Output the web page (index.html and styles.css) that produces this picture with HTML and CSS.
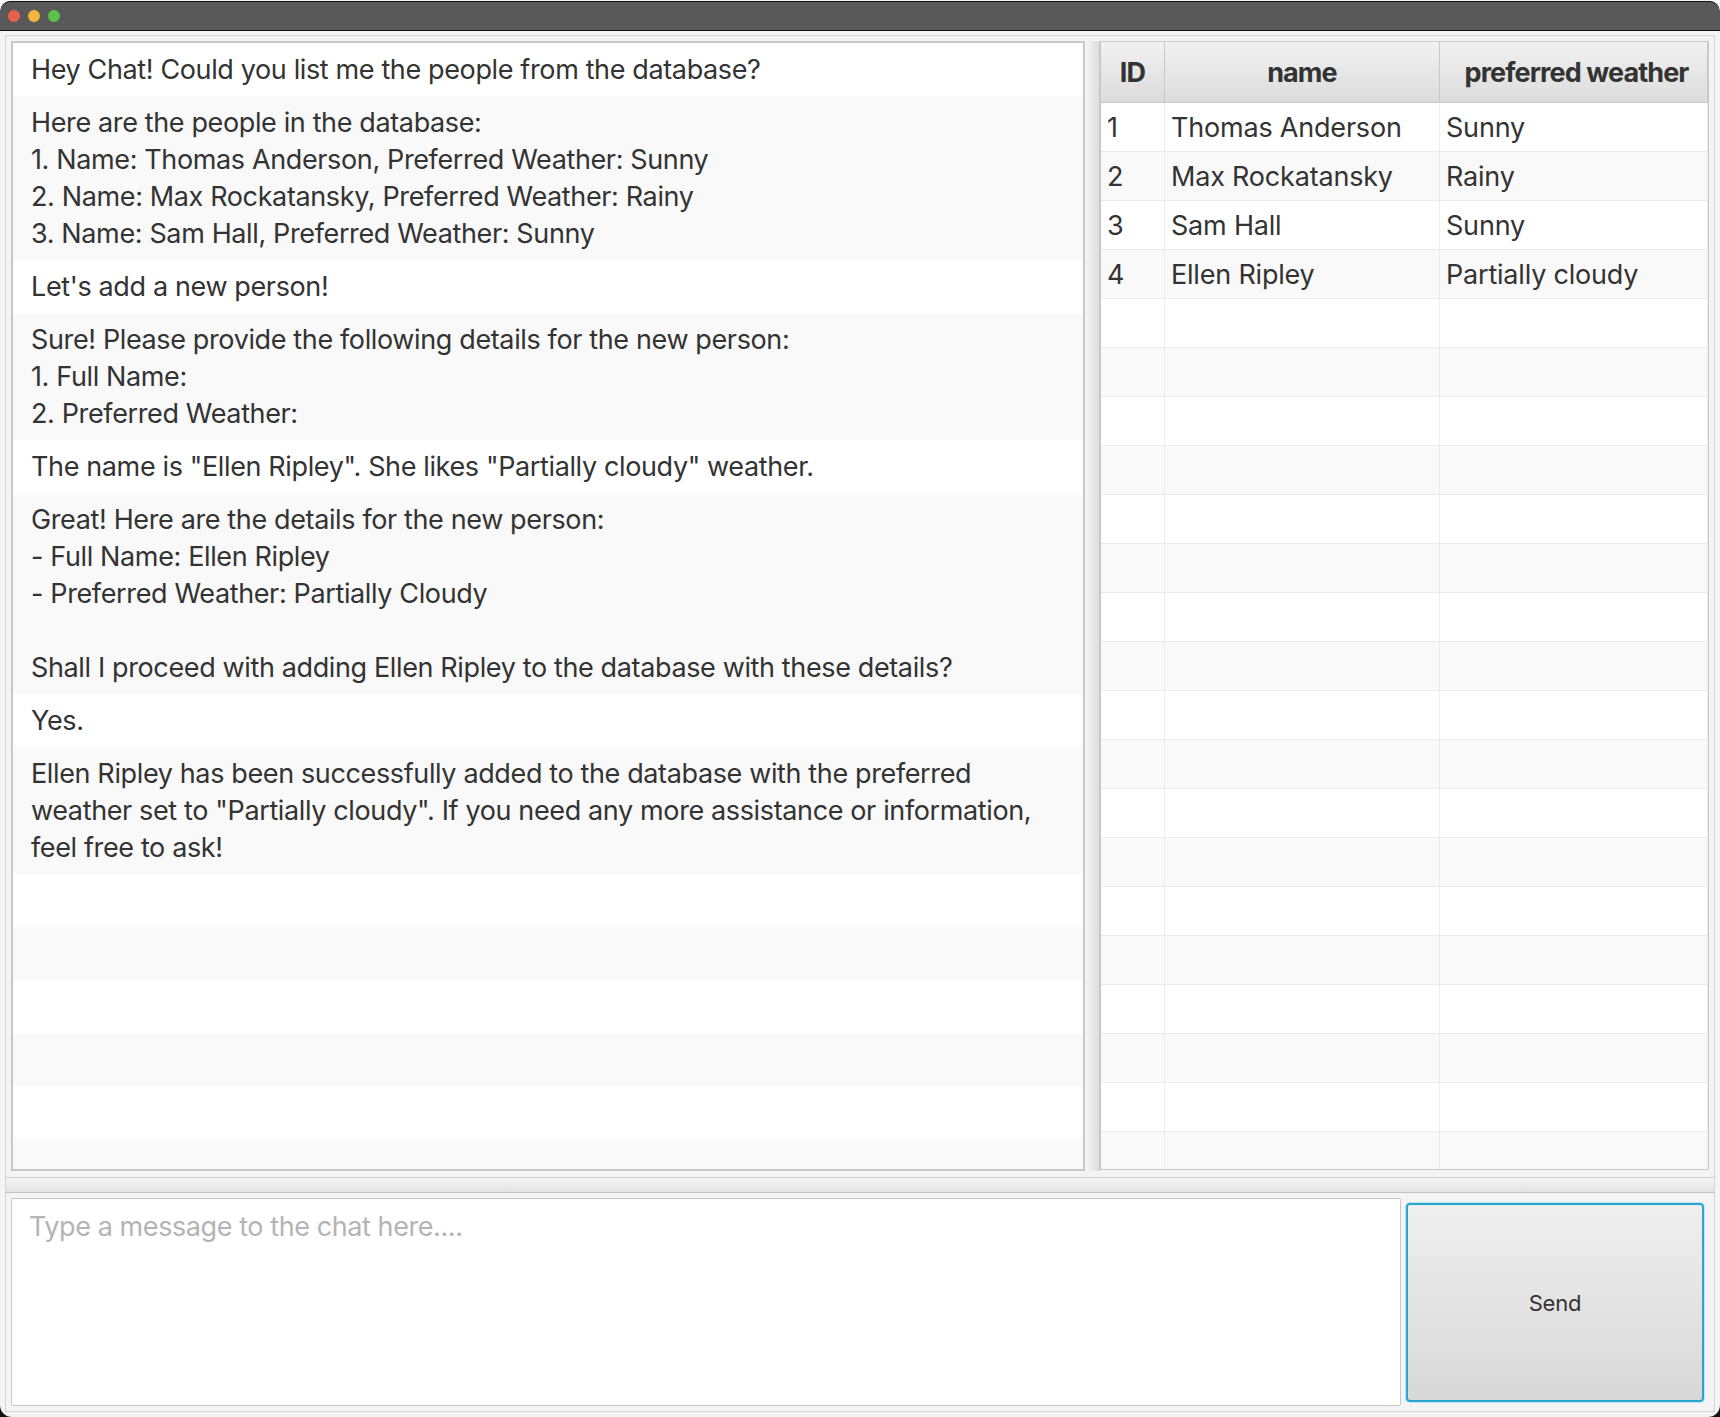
FILE: index.html
```html
<!DOCTYPE html>
<html lang="en">
<head>
    <meta charset="UTF-8">
    <title>Chat</title>
    <link rel="stylesheet" href="styles.css">
</head>
<body>
    <div class="window">
        <div class="titlebar">
            <span class="light red"></span>
            <span class="light yellow"></span>
            <span class="light green"></span>
        </div>
        <div class="frame">
            <div class="top-pane">
                <div class="chat-list">
                    <div class="msg">Hey Chat! Could you list me the people from the database?</div>
                    <div class="msg">Here are the people in the database:<br>1. Name: Thomas Anderson, Preferred Weather: Sunny<br>2. Name: Max Rockatansky, Preferred Weather: Rainy<br>3. Name: Sam Hall, Preferred Weather: Sunny</div>
                    <div class="msg">Let's add a new person!</div>
                    <div class="msg">Sure! Please provide the following details for the new person:<br>1. Full Name:<br>2. Preferred Weather:</div>
                    <div class="msg">The name is "Ellen Ripley". She likes "Partially cloudy" weather.</div>
                    <div class="msg">Great! Here are the details for the new person:<br>- Full Name: Ellen Ripley<br>- Preferred Weather: Partially Cloudy<br><br>Shall I proceed with adding Ellen Ripley to the database with these details?</div>
                    <div class="msg">Yes.</div>
                    <div class="msg">Ellen Ripley has been successfully added to the database with the preferred weather set to "Partially cloudy". If you need any more assistance or information, feel free to ask!</div>
                    <div class="msg empty"></div>
                    <div class="msg empty"></div>
                    <div class="msg empty"></div>
                    <div class="msg empty"></div>
                    <div class="msg empty"></div>
                    <div class="msg empty"></div>
                </div>
                <div class="split-v"></div>
                <div class="table-box">
                    <table class="people">
                        <thead>
                            <tr><th class="col-id">ID</th><th class="col-name">name</th><th class="col-weather">preferred weather</th></tr>
                        </thead>
                        <tbody>
                            <tr><td>1</td><td>Thomas Anderson</td><td>Sunny</td></tr>
                            <tr><td>2</td><td>Max Rockatansky</td><td>Rainy</td></tr>
                            <tr><td>3</td><td>Sam Hall</td><td>Sunny</td></tr>
                            <tr><td>4</td><td>Ellen Ripley</td><td>Partially cloudy</td></tr>
                            <tr><td></td><td></td><td></td></tr>
                            <tr><td></td><td></td><td></td></tr>
                            <tr><td></td><td></td><td></td></tr>
                            <tr><td></td><td></td><td></td></tr>
                            <tr><td></td><td></td><td></td></tr>
                            <tr><td></td><td></td><td></td></tr>
                            <tr><td></td><td></td><td></td></tr>
                            <tr><td></td><td></td><td></td></tr>
                            <tr><td></td><td></td><td></td></tr>
                            <tr><td></td><td></td><td></td></tr>
                            <tr><td></td><td></td><td></td></tr>
                            <tr><td></td><td></td><td></td></tr>
                            <tr><td></td><td></td><td></td></tr>
                            <tr><td></td><td></td><td></td></tr>
                            <tr><td></td><td></td><td></td></tr>
                            <tr><td></td><td></td><td></td></tr>
                            <tr><td></td><td></td><td></td></tr>
                            <tr><td></td><td></td><td></td></tr>
                        </tbody>
                    </table>
                </div>
            </div>
            <div class="split-h"></div>
            <div class="bottom-pane">
                <textarea class="input" placeholder="Type a message to the chat here...."></textarea>
                <button class="send">Send</button>
            </div>
        </div>
    </div>
</body>
</html>
```

FILE: styles.css
```css
html, body {
    margin: 0;
    height: 100%;
    overflow: hidden;
}
/* the dark strip only shows through the rounded bottom corners */
body {
    background: linear-gradient(to bottom, #ffffff 1390px, #111111 1390px);
    font-family: 'Inter', sans-serif;
    font-size: 27px;
    color: #333333;
}
.window {
    height: 1417px;
    display: flex;
    flex-direction: column;
    background: #f4f4f4;
    border-radius: 12px;
    overflow: hidden;
    box-sizing: border-box;
    padding-bottom: 5px;
}
.titlebar {
    height: 28px;
    margin-top: 1px;
    display: flex;
    align-items: center;
    gap: 8px;
    padding-left: 8px;
    background: #595959;
    border-top: 1px solid #111111;
    border-bottom: 1px solid #111111;
    border-radius: 10px 10px 0 0;
    flex-shrink: 0;
}
.light {
    width: 12px;
    height: 12px;
    border-radius: 50%;
}
.red { background: #e5604e; }
.yellow { background: #f2b63c; }
.green { background: #5cc04c; }
.frame {
    flex: 1;
    min-height: 0;
    margin: 4px 5px 0;
    border: 1px solid #d4d4d4;
    display: flex;
    flex-direction: column;
}
.top-pane {
    height: 1130px;
    margin: 5px 5px 0 5px;
    display: flex;
    flex-shrink: 0;
}
.chat-list {
    width: 1074px;
    box-sizing: border-box;
    border: 2px solid #c8c8c8;
    overflow: hidden;
    background: #ffffff;
    flex-shrink: 0;
}
.msg {
    padding: 8px 18px;
    line-height: 37px;
    letter-spacing: -0.37px;
    background: #ffffff;
}
.msg:nth-child(even) {
    background: #f9f9f9;
}
.msg.empty {
    height: 37px;
}
.split-v {
    width: 15px;
    background: linear-gradient(to right, #f6f6f6, #dedede);
    border-right: 1px solid #c8c8c8;
    box-sizing: border-box;
    flex-shrink: 0;
}
.table-box {
    flex: 1;
    height: 1129px;
    box-sizing: border-box;
    border: 1px solid #c8c8c8;
    overflow: hidden;
    background: #f9f9f9;
}
.people {
    width: 100%;
    border-collapse: collapse;
    table-layout: fixed;
}
.people th {
    height: 60px;
    padding: 0;
    font-size: 27px;
    font-weight: 700;
    letter-spacing: -0.9px;
    color: #333333;
    background: linear-gradient(to bottom, #f1f1f1, #dcdcdc);
    border-right: 1px solid #c8c8c8;
    border-bottom: 1px solid #c8c8c8;
}
.col-id { width: 63px; }
.col-name { width: 274px; }
.people th.col-weather {
    padding-left: 6px;
}
.people td {
    height: 48px;
    padding: 0 6px;
    border-right: 1px solid #ececec;
    border-bottom: 1px solid #ececec;
    letter-spacing: -0.2px;
    white-space: nowrap;
}
.people tr:nth-child(odd) td {
    background: #ffffff;
}
.people tr:nth-child(even) td {
    background: #f9f9f9;
}
.split-h {
    height: 14px;
    margin-top: 6px;
    background: linear-gradient(to bottom, #f6f6f6, #e2e2e2);
    border-top: 1px solid #cccccc;
    border-bottom: 1px solid #c4c4c4;
    flex-shrink: 0;
}
.bottom-pane {
    flex: 1;
    min-height: 0;
    display: flex;
    gap: 5px;
    padding: 5px 10px 5px 5px;
}
.input {
    width: 1390px;
    box-sizing: border-box;
    border: 1px solid #c8c8c8;
    border-radius: 2px;
    padding: 9px 17px;
    background: #ffffff;
    font-family: inherit;
    font-size: 27px;
    letter-spacing: -0.42px;
    line-height: 37px;
    resize: none;
    outline: none;
}
.input::placeholder {
    color: #b4b4b4;
    opacity: 1;
}
.send {
    flex: 1;
    margin: 5px 0 4px;
    border: 2px solid #2ba5cf;
    border-radius: 4px;
    box-shadow: 0 0 0 1px #bfe6f4;
    background: linear-gradient(to bottom, #efefef, #d8d8d8);
    font-family: inherit;
    font-size: 22px;
    letter-spacing: -0.2px;
    color: #333333;
}
```
